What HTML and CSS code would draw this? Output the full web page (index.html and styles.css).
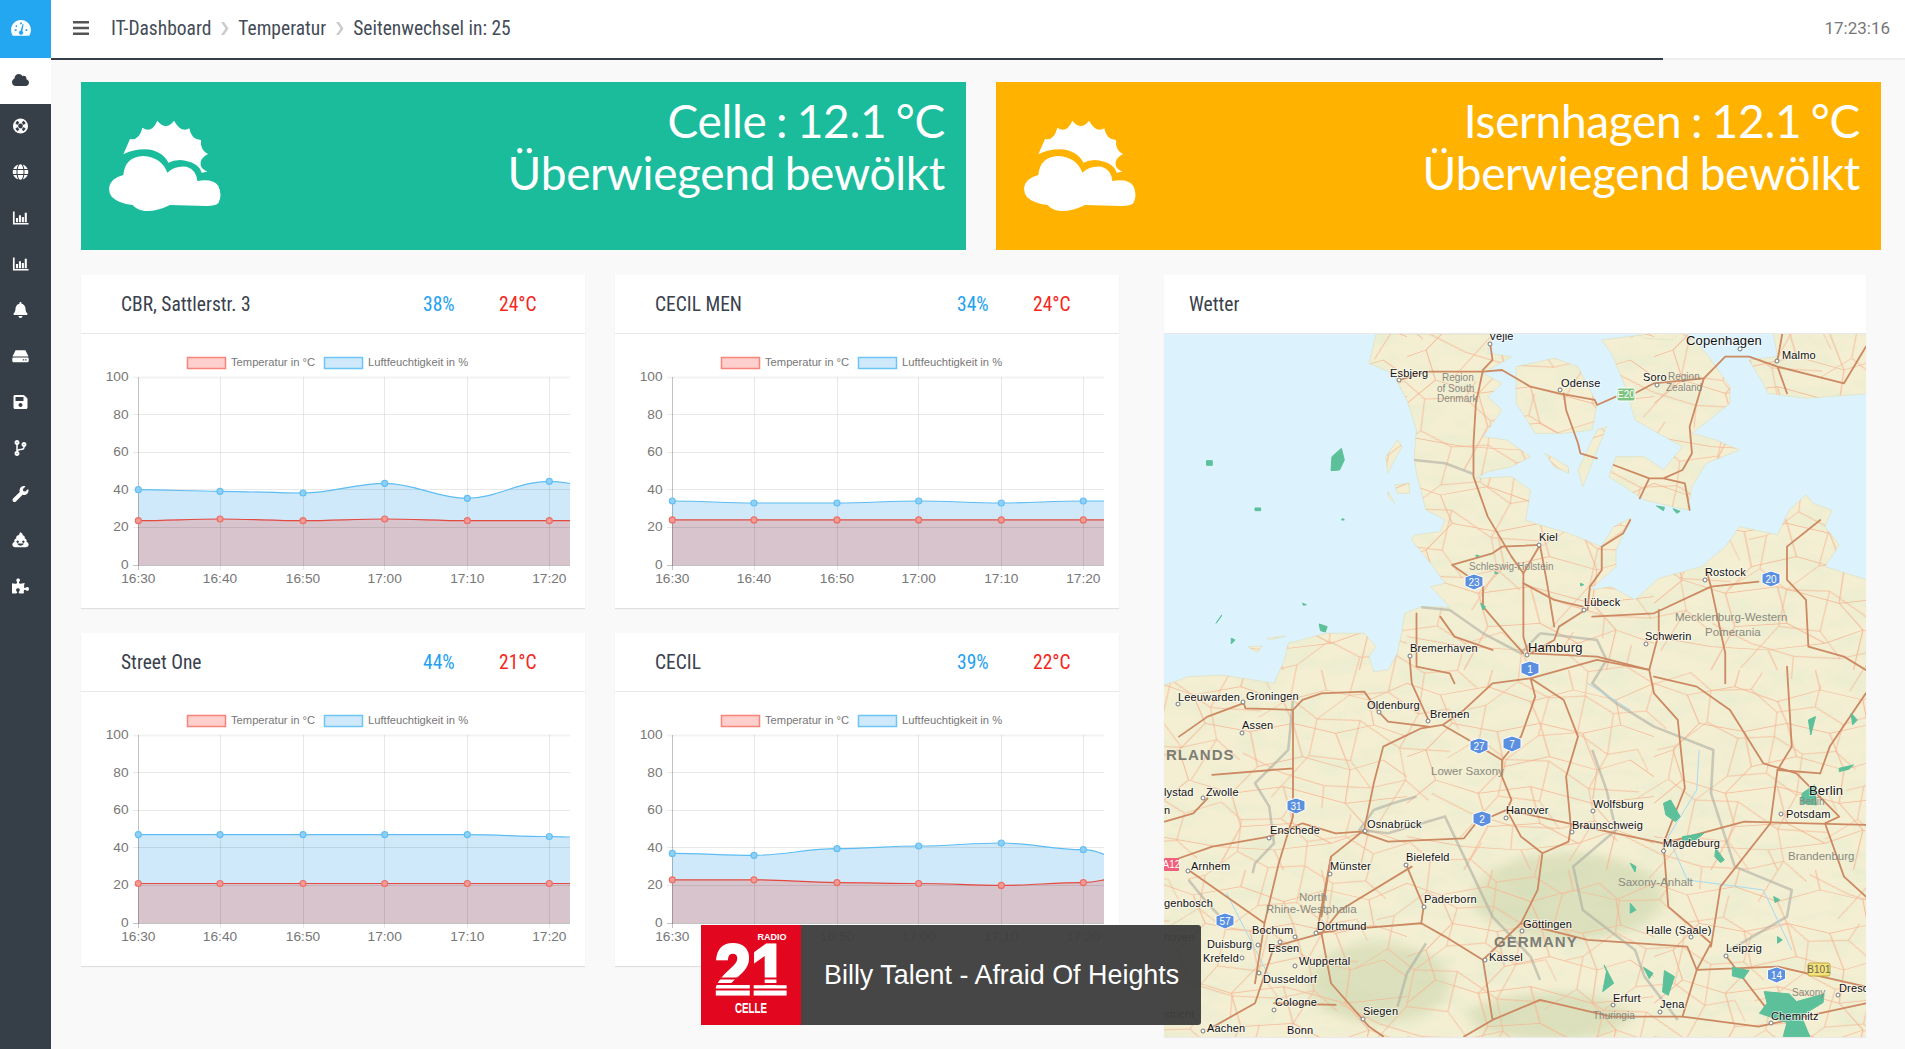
FILE: index.html
```html
<!DOCTYPE html>
<html lang="de">
<head>
<meta charset="utf-8">
<title>IT-Dashboard</title>
<link rel="stylesheet" href="styles.css">
</head>
<body>
<div class="app">
  <nav class="sidebar">
    <a class="nav-logo">
      <svg class="ico-logo" viewBox="0 0 24 20"><path class="w" d="M12 1C5.500 1 1 6 1 12c0 2.500.6 4.600 1.500 6 .3.500.8.700 1.300.700h16.400c.5 0 1-.2 1.300-.7.9-1.400 1.500-3.500 1.500-6C23 6 18.500 1 12 1z"/><path class="b" d="M13.800 5.500l-2.300 7.500a2.300 2.300 0 1 0 2 .5l1.400-7.800zM5 11.500h2v1.800H5zM17 11.500h2v1.800h-2zM6.800 6.800l1.300 1.300-1.200 1.200-1.300-1.300zM11 3.800h2v1.900h-2z"/></svg>
    </a>
    <a class="nav-item active"><svg class="ico" viewBox="0 0 640 512"><path d="M537.600 226.600c4.100-10.700 6.400-22.400 6.400-34.600 0-53-43-96-96-96-19.700 0-38.100 6-53.300 16.200C367 64.200 315.300 32 256 32c-88.400 0-160 71.600-160 160 0 2.700.1 5.400.2 8.100C40.200 219.800 0 273.200 0 336c0 79.500 64.500 144 144 144h368c70.700 0 128-57.300 128-128 0-61.900-44-113.600-102.400-125.400z"/></svg></a>
    <a class="nav-item"><svg class="ico" viewBox="0 0 18 18"><circle cx="9" cy="9" r="8.500"/><g class="cut"><path d="M3.200 5.800a7 7 0 0 1 2.600-2.600l2 2.300a4 4 0 0 0-2.300 2.300zM14.800 5.800a7 7 0 0 0-2.600-2.600l-2 2.300a4 4 0 0 1 2.300 2.300zM3.200 12.200a7 7 0 0 0 2.600 2.600l2-2.300a4 4 0 0 1-2.300-2.300zM14.800 12.200a7 7 0 0 1-2.600 2.600l-2-2.300a4 4 0 0 0 2.300-2.300z"/><circle cx="9" cy="9" r="2.700"/></g></svg></a>
    <a class="nav-item"><svg class="ico" viewBox="0 0 496 512"><path d="M336.500 160C322 70.700 287.800 8 248 8s-74 62.700-88.500 152h177zM152 256c0 22.200 1.200 43.500 3.300 64h185.300c2.100-20.500 3.300-41.800 3.300-64s-1.200-43.500-3.300-64H155.300c-2.100 20.500-3.300 41.800-3.300 64zm324.700-96c-28.600-67.900-86.500-120.400-158-141.600 24.400 33.800 41.200 84.700 50 141.600h108zM177.200 18.400C105.800 39.600 47.800 92.100 19.300 160h108c8.700-56.900 25.500-107.800 49.900-141.600zM487.400 192H372.700c2.100 21 3.300 42.500 3.300 64s-1.200 43-3.300 64h114.600c5.500-20.500 8.600-41.800 8.600-64s-3.100-43.500-8.500-64zM120 256c0-21.500 1.200-43 3.300-64H8.600C3.200 212.500 0 233.800 0 256s3.200 43.500 8.600 64h114.600c-2-21-3.200-42.500-3.200-64zm39.500 96c14.500 89.300 48.700 152 88.500 152s74-62.700 88.500-152h-177zm159.300 141.600c71.400-21.200 129.400-73.700 158-141.600h-108c-8.800 56.900-25.600 107.800-50 141.600zM19.300 352c28.600 67.900 86.500 120.400 158 141.600-24.400-33.800-41.200-84.700-50-141.600h-108z"/></svg></a>
    <a class="nav-item"><svg class="ico" viewBox="0 0 18 16"><path d="M1 1h1.800v12.200H17.500V15H1zM4.200 8h2.200v4.500H4.200zM7.300 5h2.200v7.500H7.300zM10.400 7h2.200v5.500h-2.200zM13.500 2.500h2.200v10h-2.200z"/></svg></a>
    <a class="nav-item"><svg class="ico" viewBox="0 0 18 16"><path d="M1 1h1.800v12.200H17.500V15H1zM4.200 8h2.200v4.500H4.200zM7.300 5h2.200v7.500H7.300zM10.400 7h2.200v5.500h-2.200zM13.500 2.500h2.200v10h-2.200z"/></svg></a>
    <a class="nav-item"><svg class="ico" viewBox="0 0 448 512"><path d="M224 512c35.320 0 63.970-28.650 63.970-64H160.030c0 35.350 28.650 64 63.970 64zm215.390-149.710c-19.320-20.760-55.470-51.990-55.470-154.290 0-77.700-54.480-139.900-127.940-155.160V32c0-17.670-14.320-32-31.980-32s-31.980 14.330-31.980 32v20.840C118.560 68.100 64.080 130.300 64.080 208c0 102.300-36.150 133.530-55.470 154.290-6 6.450-8.660 14.160-8.610 21.710.11 16.400 12.980 32 32.100 32h383.800c19.120 0 32-15.600 32.100-32 .05-7.550-2.610-15.270-8.610-21.710z"/></svg></a>
    <a class="nav-item"><svg class="ico" viewBox="0 0 18 14"><path d="M3.800 1h10.400l3.300 6.500H.5zM1.500 8.500h15A1.200 1.200 0 0 1 17.700 9.700v2.600a1.200 1.200 0 0 1-1.200 1.200h-15A1.200 1.200 0 0 1 .3 12.300V9.700a1.200 1.200 0 0 1 1.200-1.200z"/><path class="cut" d="M11.500 10.400h1.400v1.300h-1.400zM14 10.400h1.400v1.300H14z"/></svg></a>
    <a class="nav-item"><svg class="ico" viewBox="0 0 448 512"><path d="M433.941 129.941l-83.882-83.882A48 48 0 0 0 316.118 32H48C21.490 32 0 53.490 0 80v352c0 26.510 21.490 48 48 48h352c26.510 0 48-21.490 48-48V163.882a48 48 0 0 0-14.059-33.941zM224 416c-35.346 0-64-28.654-64-64 0-35.346 28.654-64 64-64s64 28.654 64 64c0 35.346-28.654 64-64 64zm96-304.520V212c0 6.627-5.373 12-12 12H76c-6.627 0-12-5.373-12-12V108c0-6.627 5.373-12 12-12h228.520c3.183 0 6.235 1.264 8.485 3.515l3.480 3.480A11.996 11.996 0 0 1 320 111.480z"/></svg></a>
    <a class="nav-item"><svg class="ico" viewBox="0 0 384 512"><path d="M384 144c0-44.200-35.800-80-80-80s-80 35.800-80 80c0 36.400 24.300 67.100 57.500 76.800-.6 16.100-4.200 28.500-11 36.900-15.400 19.200-49.300 22.400-85.200 25.700-28.200 2.600-57.400 5.400-81.300 16.900v-144c32.500-10.200 56-40.500 56-76.300 0-44.200-35.800-80-80-80S0 35.800 0 80c0 35.800 23.500 66.100 56 76.300v199.300C23.500 365.900 0 396.200 0 432c0 44.200 35.800 80 80 80s80-35.800 80-80c0-34-21.200-63.100-51.200-74.600 3.100-5.200 7.800-9.800 14.900-13.400 16.200-8.200 40.400-10.400 66.100-12.800 42.200-3.900 90-8.400 118.200-43.400 14-17.400 21.100-39.800 21.600-67.900 31.600-10.800 54.400-40.700 54.400-75.900zM80 64c8.800 0 16 7.200 16 16s-7.200 16-16 16-16-7.200-16-16 7.200-16 16-16zm0 384c-8.800 0-16-7.200-16-16s7.200-16 16-16 16 7.200 16 16-7.200 16-16 16zm224-320c8.800 0 16 7.200 16 16s-7.200 16-16 16-16-7.200-16-16 7.200-16 16-16z"/></svg></a>
    <a class="nav-item"><svg class="ico" viewBox="0 0 512 512"><path d="M507.730 109.100c-2.240-9.030-13.540-12.090-20.120-5.510l-74.360 74.360-67.880-11.310-11.310-67.880 74.360-74.360c6.620-6.620 3.430-17.900-5.660-20.160-47.380-11.740-99.550.91-136.580 37.930-39.640 39.640-50.550 97.100-34.050 147.200L18.740 402.760c-24.990 24.990-24.990 65.510 0 90.500 24.990 24.990 65.510 24.990 90.500 0l213.210-213.210c50.120 16.710 107.470 5.680 147.370-34.220 37.070-37.070 49.700-89.320 37.910-136.730z"/></svg></a>
    <a class="nav-item"><svg class="ico" viewBox="0 0 18 17"><path d="M8.500.3c2 .6 3 1.900 2.800 3.200 1.400.2 2.300 1.200 2.300 2.500 0 .4-.1.700-.2 1 1.300.2 2.200 1.200 2.200 2.400 0 .4-.1.800-.3 1.100 1.500.3 2.400 1.300 2.400 2.700 0 1.700-1.400 3-3.200 3H3.500C1.700 16.200.300 14.900.300 13.200c0-1.400.9-2.400 2.400-2.700-.2-.3-.3-.7-.3-1.100 0-1.200.9-2.200 2.200-2.400-.1-.3-.2-.6-.2-1 0-1.300 1-2.300 2.400-2.500C7.800 2.700 8 1.500 8.500.300z"/><path class="cut" d="M6 9a1.300 1.300 0 1 0 .01 0zM12 9a1.300 1.300 0 1 0 .01 0zM5.500 12.300h7c-.5 1.500-2 2.200-3.500 2.200s-3-.7-3.500-2.200z"/></svg></a>
    <a class="nav-item"><svg class="ico" viewBox="0 0 576 512"><path d="M519.442 288.651c-41.519 0-59.500 31.593-82.058 31.593C377.409 320.244 432 144 432 144s-196.288 80-196.288-3.297c0-35.827 36.288-46.250 36.288-85.985C272 19.216 243.885 0 210.539 0c-34.654 0-66.366 18.891-66.366 56.346 0 41.364 31.711 59.277 31.711 81.750C175.885 207.719 0 166.758 0 166.758v333.237s178.635 41.047 178.635-28.662c0-22.473-40-40.107-40-81.471 0-37.456 29.250-56.346 63.577-56.346 33.673 0 61.788 19.216 61.788 54.717 0 39.735-36.288 50.158-36.288 85.985 0 60.803 129.675 25.730 181.230 25.730 0 0-34.725-120.101 25.827-120.101 35.962 0 46.423 36.152 86.308 36.152C556.712 416 576 387.990 576 354.443c0-34.199-18.962-65.792-56.558-65.792z"/></svg></a>
  </nav>

  <div class="main">
    <header class="topbar">
      <svg class="burger" viewBox="0 0 16 14"><path d="M0 0h16v2.400H0zM0 5.800h16v2.400H0zM0 11.600h16V14H0z"/></svg>
      <ol class="crumbs">
        <li>IT-Dashboard</li>
        <li class="sep"><svg viewBox="0 0 9 13"><path d="M1 0h3l4.500 6.500L4 13H1l4.500-6.500z"/></svg></li>
        <li>Temperatur</li>
        <li class="sep"><svg viewBox="0 0 9 13"><path d="M1 0h3l4.500 6.500L4 13H1l4.500-6.500z"/></svg></li>
        <li>Seitenwechsel in: 25</li>
      </ol>
      <time class="clock">17:23:16</time>
    </header>
    <div class="progress"><div class="progress-bar"></div></div>

    <main class="content">
      <section class="weather-row">
        <article class="weather weather-green">
          <svg class="weather-icon" viewBox="0 0 480 390"><path d="M100 163L120 117Q148 122 157 83Q184 102 202 62Q228 94 252 62Q274 100 298 85Q304 120 333 120Q330 150 354 162Q328 175 332 196Q335 208 352 215L335 218Q325 185 270 180Q250 180 235 188Q215 150 165 148Q130 148 100 163Z"/><path d="M57 265Q60 235 100 225Q105 170 160 168Q215 172 232 218Q255 196 290 200Q320 210 322 243Q370 235 385 258Q398 285 385 310Q375 318 350 318L240 315Q200 335 165 333Q140 330 128 315Q85 310 65 290Q57 280 57 265Z"/></svg>
          <div class="weather-text"><div>Celle : 12.1 °C</div><div>Überwiegend bewölkt</div></div>
        </article>
        <article class="weather weather-orange">
          <svg class="weather-icon" viewBox="0 0 480 390"><path d="M100 163L120 117Q148 122 157 83Q184 102 202 62Q228 94 252 62Q274 100 298 85Q304 120 333 120Q330 150 354 162Q328 175 332 196Q335 208 352 215L335 218Q325 185 270 180Q250 180 235 188Q215 150 165 148Q130 148 100 163Z"/><path d="M57 265Q60 235 100 225Q105 170 160 168Q215 172 232 218Q255 196 290 200Q320 210 322 243Q370 235 385 258Q398 285 385 310Q375 318 350 318L240 315Q200 335 165 333Q140 330 128 315Q85 310 65 290Q57 280 57 265Z"/></svg>
          <div class="weather-text"><div>Isernhagen : 12.1 °C</div><div>Überwiegend bewölkt</div></div>
        </article>
      </section>

      <section class="panels">
        <article class="card chart-a">
          <header class="card-head"><span class="card-title">CBR, Sattlerstr. 3</span><span class="hum">38%</span><span class="temp">24°C</span></header>
          <svg class="chart" viewBox="0 1 504 274">
            <path class="a-hum" d="M57 156.700C87 156.700 109 158.300 139 158.300C169 158.300 192 160 222 160C252 160 274 150.300 304 150.300C334 150.300 356 165.300 386 165.300C416 165.300 438 148.300 468 148.300C478 148.300 483 149.500 489 150.500V232H57Z"/>
            <path class="a-temp" d="M57 187.700C87 187.700 109 186 139 186C169 186 192 187.700 222 187.700C252 187.700 274 186 304 186C334 186 356 187.700 386 187.700C416 187.700 438 187.700 468 187.700C478 187.700 483 187.700 489 187.700V232H57Z"/>
            <use href="#chart-lines"/>
            <path class="l-hum" d="M57 156.700C87 156.700 109 158.300 139 158.300C169 158.300 192 160 222 160C252 160 274 150.300 304 150.300C334 150.300 356 165.300 386 165.300C416 165.300 438 148.300 468 148.300C478 148.300 483 149.500 489 150.500"/>
            <path class="l-temp" d="M57 187.700C87 187.700 109 186 139 186C169 186 192 187.700 222 187.700C252 187.700 274 186 304 186C334 186 356 187.700 386 187.700C416 187.700 438 187.700 468 187.700C478 187.700 483 187.700 489 187.700"/>
            <g class="dot-h"><circle cx="57.300" cy="156.700" r="3"/><circle cx="139" cy="158.300" r="3"/><circle cx="222" cy="160" r="3"/><circle cx="303.700" cy="150.300" r="3"/><circle cx="386.300" cy="165.300" r="3"/><circle cx="468.300" cy="148.300" r="3"/></g>
            <g class="dot-t"><circle cx="57.300" cy="187.700" r="3"/><circle cx="139" cy="186" r="3"/><circle cx="222" cy="187.700" r="3"/><circle cx="303.700" cy="186" r="3"/><circle cx="386.300" cy="187.700" r="3"/><circle cx="468.300" cy="187.700" r="3"/></g>
            <rect class="lg-t" x="106.500" y="24.500" width="38" height="11"/><text class="lg" x="150" y="33">Temperatur in °C</text><rect class="lg-h" x="243.500" y="24.500" width="38" height="11"/><text class="lg" x="287" y="33">Luftfeuchtigkeit in %</text>
            <g class="ty"><text x="47.500" y="48">100</text><text x="47.500" y="85.600">80</text><text x="47.500" y="123">60</text><text x="47.500" y="160.500">40</text><text x="47.500" y="198">20</text><text x="47.500" y="235.500">0</text></g>
            <g class="tx"><text x="57.300" y="250">16:30</text><text x="139" y="250">16:40</text><text x="222" y="250">16:50</text><text x="303.700" y="250">17:00</text><text x="386.300" y="250">17:10</text><text x="468.300" y="250">17:20</text></g>
          </svg>
        </article>

        <article class="card chart-b">
          <header class="card-head"><span class="card-title">CECIL MEN</span><span class="hum">34%</span><span class="temp">24°C</span></header>
          <svg class="chart" viewBox="0 1 504 274">
            <path class="a-hum" d="M57 168C87 168 109 170 139 170C169 170 192 170 222 170C252 170 274 168 304 168C334 168 356 170 386 170C416 170 438 168 468 168C478 168 483 168 489 168V232H57Z"/>
            <path class="a-temp" d="M57 186.900H489V232H57Z"/>
            <use href="#chart-lines"/>
            <path class="l-hum" d="M57 168C87 168 109 170 139 170C169 170 192 170 222 170C252 170 274 168 304 168C334 168 356 170 386 170C416 170 438 168 468 168C478 168 483 168 489 168"/>
            <path class="l-temp" d="M57 186.900H489"/>
            <g class="dot-h"><circle cx="57.300" cy="168" r="3"/><circle cx="139" cy="170" r="3"/><circle cx="222" cy="170" r="3"/><circle cx="303.700" cy="168" r="3"/><circle cx="386.300" cy="170" r="3"/><circle cx="468.300" cy="168" r="3"/></g>
            <g class="dot-t"><circle cx="57.300" cy="186.900" r="3"/><circle cx="139" cy="186.900" r="3"/><circle cx="222" cy="186.900" r="3"/><circle cx="303.700" cy="186.900" r="3"/><circle cx="386.300" cy="186.900" r="3"/><circle cx="468.300" cy="186.900" r="3"/></g>
            <rect class="lg-t" x="106.500" y="24.500" width="38" height="11"/><text class="lg" x="150" y="33">Temperatur in °C</text><rect class="lg-h" x="243.500" y="24.500" width="38" height="11"/><text class="lg" x="287" y="33">Luftfeuchtigkeit in %</text>
            <g class="ty"><text x="47.500" y="48">100</text><text x="47.500" y="85.600">80</text><text x="47.500" y="123">60</text><text x="47.500" y="160.500">40</text><text x="47.500" y="198">20</text><text x="47.500" y="235.500">0</text></g>
            <g class="tx"><text x="57.300" y="250">16:30</text><text x="139" y="250">16:40</text><text x="222" y="250">16:50</text><text x="303.700" y="250">17:00</text><text x="386.300" y="250">17:10</text><text x="468.300" y="250">17:20</text></g>
          </svg>
        </article>

        <article class="card map-card">
          <header class="card-head"><span class="card-title">Wetter</span></header>
          <svg class="map" viewBox="0 1 702 703">
            <defs>
              <path id="land-main" d="M-10 1255L60 1220L130 1215L240 1240L262 1170L270 1120L350 1090L430 1090L455 1130L440 1160L450 1205L480 1200L500 1150L510 1080L515 1030L550 1010L610 1012L590 980L570 950L600 940L570 880L530 810L535 795L590 785L600 750L560 720L540 610L535 560L540 480L520 390L490 310L440 280L455 192L700 192L690 250L740 260L680 310L720 340L690 380L720 420L695 470L680 500L730 510L780 560L740 590L690 605L665 625L740 620L780 660L770 750L800 765L860 790L930 830L955 770L990 745L975 795L960 840L960 890L905 960L950 950L1000 990L1050 925L1140 890L1190 830L1220 770L1300 795L1325 720L1360 675L1375 700L1415 720L1400 770L1430 825L1400 890L1500 935V2310H-10ZM750 290L830 265L880 290L920 400L910 480L850 490L790 490L750 400ZM930 210L1100 180L1150 250L1200 350L1200 400L1120 490L1170 510L1220 540L1150 580L1120 650L1110 720L1020 690L945 620L960 560L1020 560L1060 600L1100 530L1000 450L980 350L950 250ZM1290 180H1500V370L1360 385L1280 370L1270 340L1240 270L1300 260ZM940 470L890 650L880 600L920 480ZM810 550L860 590L860 610L830 590ZM500 510L475 560L480 610L490 580L510 530ZM495 645L525 640L525 670L500 670ZM480 665L495 700L480 680ZM225 1105L265 1098L230 1110ZM185 1130L215 1128L205 1148ZM1000 185L1100 180L1080 210L1020 205Z"/>
              <path id="minor-net" class="minor" d="M0 40L70 75L95 160L40 240L60 330L0 400M70 75L170 50L260 95L350 60L440 90L520 40M95 160L190 185L280 160L370 190L450 165L520 200M190 185L205 290L150 370L170 470L120 600M260 95L280 160L300 260L205 290M300 260L400 300L470 270L520 320M370 190L400 300L390 400L440 480L420 600M60 330L150 370L260 350L390 400L520 380M260 350L280 460L170 470M280 460L360 520L440 480L520 520M0 500L120 530L240 540L360 520M170 50L180 0M350 60L340 0M440 90L450 165M40 240L0 260M240 540L260 600"/>
              <pattern id="minor-a" width="520" height="600" patternUnits="userSpaceOnUse"><use href="#minor-net"/></pattern>
              <pattern id="minor-b" width="520" height="600" patternUnits="userSpaceOnUse" patternTransform="translate(130 170) rotate(17) scale(.8 1.1)"><use href="#minor-net"/></pattern>
              <filter id="soft" x="-30%" y="-30%" width="160%" height="160%"><feGaussianBlur stdDeviation="14"/></filter>
              <filter id="mottle" x="0" y="0" width="100%" height="100%"><feTurbulence type="fractalNoise" baseFrequency=".012 .02" numOctaves="4" seed="7"/><feColorMatrix values="0 0 0 0 .76  0 0 0 0 .83  0 0 0 0 .62  2.600 0 0 0 -1.100"/></filter>
              <clipPath id="land-clip"><use href="#land-main"/></clipPath>
            </defs>
            <rect class="sea" width="702" height="704"/>
            <g transform="translate(-4,-63) scale(.475,.3333)">
              <use href="#land-main" class="land"/>
              <g clip-path="url(#land-clip)">
                <rect class="mottle" x="0" y="190" width="1490" height="2120" filter="url(#mottle)"/>
                <g class="terrain" filter="url(#soft)">
                  <ellipse cx="860" cy="1880" rx="200" ry="130"/><ellipse cx="460" cy="2140" rx="150" ry="120"/><ellipse cx="820" cy="2240" rx="170" ry="70"/>
                </g>
              </g>
              <use href="#land-main" class="minor-fill-a"/>
              <use href="#land-main" class="minor-fill-b"/>
              <g class="border">
                <path d="M535 570L600 580L660 612"/>
                <path d="M550 1012L610 1020L680 1090L760 1150L800 1090M800 1090L920 1110L940 1170L910 1240L960 1300L1040 1370L1165 1440L1160 1570L1210 1790L1330 1860L1320 1940L1200 2040M910 1440L940 1560L960 1680L870 1790L890 1920L1000 2040L1020 2120L1090 2250M280 1290L270 1440L200 1540L230 1610L240 1720L200 1780L195 1810M540 1580L490 1600L450 1620L420 1680L480 1690L600 1640L640 1760L700 1940L780 2060L800 2130M60 1830L100 1900L140 1960M560 2020L520 2110L500 2210"/>
              </g>
              <g class="rivers"><path d="M1135 1440L1130 1560L1070 1700L1110 1830L1270 1860L1330 2040M900 1240L990 1320M140 1870L230 2120"/></g>
              <g class="road">
                <path d="M695 220L700 270L680 300L665 400L660 520L660 620L690 740L740 860L765 910L765 1100L775 1150"/>
                <path d="M505 330L560 305L680 305L720 300L780 350L840 370L915 390L920 405L960 380M1000 370L1040 340L1145 325L1190 260L1240 260L1300 290L1440 340L1486 230M1300 290L1320 370M1310 192L1300 270"/>
                <path d="M850 370L855 420L880 520L885 550L920 565M1145 325L1115 470L1120 550L1100 600L1060 625L1030 625L1010 685M955 585L1030 625M1060 625L1105 640L1115 720"/>
                <path d="M615 885L700 850L720 830L800 825L815 940L830 1070M615 885L680 950L680 1010L740 1110L765 1150M800 825L765 910"/>
                <path d="M990 750L975 790L930 830L930 900L905 950L900 1020M765 940L830 990L890 1010M895 1020L840 1070L830 1110L780 1150"/>
                <path d="M910 1040L1040 1030L1160 950L1260 935M1320 930L1360 990L1365 1130L1440 1160L1486 1200M1150 900L1160 950L1190 1150L1190 1240M1050 1020L1050 1090L1030 1200M1320 930L1320 830L1390 750M540 1030L540 1190L610 1210L620 1240M590 1040L620 1100L700 1140M780 1150L920 1160L1030 1200"/>
              </g>
              <g class="road" transform="translate(0,1140)">
                <path d="M780 85L700 100L640 180L595 225L550 235L470 290L450 400L430 540L360 620L330 850M780 85L790 140L760 260L720 330L720 380L740 450L730 480L665 520L640 565L480 575L420 545L370 550L300 520L230 560L110 590L10 640M595 225L650 270L720 330"/>
                <path d="M780 85L850 150L880 260L855 380L865 530L860 575L805 610L760 560L730 480M805 610L795 720L760 820L680 930L600 860L550 820L380 840L330 850M730 480L860 520L1060 580L1230 515L1486 525"/>
                <path d="M1060 580L1070 770L1160 880L1130 960L1100 1100M1060 580L1105 415L1090 210L1040 130L1030 60L920 30L780 85M1040 80L1130 110L1200 180L1270 340L1340 370L1430 500L1400 520L1440 680L1486 740M1320 50L1330 290L1300 360L1285 520L1180 710L1160 890M1390 370L1410 290L1486 130"/>
                <path d="M525 15L530 100L565 210M460 185L480 215L565 230M175 155L180 175L280 180L300 150L340 130L430 125L460 185M40 260L100 200L175 160M280 180L280 500L250 640L220 820M110 375L280 355M100 445L70 490L10 515M60 660L220 820L200 1000M360 620L340 800M530 650L380 780L340 850M520 650L555 770L550 820"/>
                <path d="M680 930L700 1110L640 1160M700 1110L800 1050L950 1100L1100 1100L1260 1130L1486 1060M760 820L900 870L1110 890L1130 960L1300 950L1486 1010M340 850L240 890L200 1060L100 1140M340 850L360 1000L440 1130L470 1160M240 1060L370 1065M1190 915L1290 1100M1300 360L1390 370"/>
              </g>
              <g class="radar">
                <path d="M382 535L388 570L378 600L360 602L362 560ZM98 572L110 572L110 586L98 586ZM200 714L212 714L212 722L200 722ZM1045 708L1062 712L1060 722ZM1080 716L1095 724L1088 730ZM675 1000L685 1010L680 1020ZM335 1062L352 1070L348 1086L338 1082ZM130 1035L118 1060L126 1045ZM150 1105L158 1110L150 1122ZM385 745L388 750L382 750ZM665 855L672 858L666 860ZM705 905L712 910L706 912ZM885 940L892 944L886 948ZM300 1000L308 1004L302 1006Z"/>
                <path d="M1060 1600L1075 1590L1095 1640L1085 1655L1065 1635ZM1170 1735L1188 1770L1180 1778L1168 1760ZM1352 1570L1378 1545L1382 1605L1350 1600ZM1100 1700L1145 1690L1130 1708L1100 1716ZM1430 1495L1460 1485L1450 1498L1430 1505ZM1455 1330L1468 1350L1458 1365ZM990 1780L1002 1790L1000 1806ZM935 2085L955 2140L932 2165L940 2105ZM1018 2092L1038 2110L1030 2126ZM1062 2102L1083 2120L1070 2176L1058 2166ZM1205 2092L1240 2102L1228 2126L1205 2118ZM1272 2165L1325 2172L1340 2195L1398 2172L1396 2198L1350 2238L1368 2300H1312L1320 2258L1262 2230L1278 2200ZM1292 1880L1305 1890L1295 1898ZM1365 1350L1380 1340L1370 1395ZM990 1900L1002 1920L990 1930ZM1300 2000L1310 2010L1300 2020Z"/>
              </g>
            </g>
            <g class="places">
              <circle cx="326" cy="11" r="2"/><circle cx="576" cy="16" r="2"/><circle cx="613" cy="28" r="2"/><circle cx="235" cy="47" r="2"/><circle cx="396" cy="57" r="2"/><circle cx="493" cy="52" r="2"/><circle cx="375" cy="212" r="2"/><circle cx="541" cy="247" r="2"/><circle cx="420" cy="277" r="2"/><circle cx="482" cy="311" r="2"/><circle cx="246" cy="323" r="2"/><circle cx="363" cy="322" r="2"/><circle cx="14" cy="371" r="2"/><circle cx="79" cy="369" r="2"/><circle cx="215" cy="379" r="2"/><circle cx="264" cy="388" r="2"/><circle cx="78" cy="400" r="2"/><circle cx="39" cy="465" r="2"/><circle cx="342" cy="485" r="2"/><circle cx="429" cy="478" r="2"/><circle cx="617" cy="481" r="2"/><circle cx="201" cy="498" r="2"/><circle cx="105" cy="505" r="2"/><circle cx="408" cy="499" r="2"/><circle cx="499.500" cy="518" r="2"/><circle cx="242" cy="532" r="2"/><circle cx="24" cy="538" r="2"/><circle cx="166" cy="541" r="2"/><circle cx="260" cy="574" r="2"/><circle cx="131" cy="604" r="2"/><circle cx="152" cy="600" r="2"/><circle cx="358" cy="598" r="2"/><circle cx="527" cy="604" r="2"/><circle cx="94" cy="612" r="2"/><circle cx="116" cy="609" r="2"/><circle cx="562" cy="623" r="2"/><circle cx="78" cy="625" r="2"/><circle cx="321" cy="627" r="2"/><circle cx="131" cy="633" r="2"/><circle cx="95" cy="640" r="2"/><circle cx="449" cy="672" r="2"/><circle cx="110" cy="677" r="2"/><circle cx="496" cy="679" r="2"/><circle cx="199" cy="686" r="2"/><circle cx="607" cy="690" r="2"/><circle cx="674" cy="662" r="2"/><circle cx="39" cy="698" r="2"/>
            </g>
            <g class="shields">
              <g class="sh-blue">
                <path d="M301 244l9-3 9 3v9l-9 4-9-4z"/><path d="M598 241l9-3 9 3v9l-9 4-9-4z"/><path d="M357 331l9-3 9 3v9l-9 4-9-4z"/><path d="M306 408l9-3 9 3v9l-9 4-9-4z"/><path d="M339 406l9-3 9 3v9l-9 4-9-4z"/><path d="M123 468l9-3 9 3v9l-9 4-9-4z"/><path d="M309 481l9-3 9 3v9l-9 4-9-4z"/><path d="M52 583l9-3 9 3v9l-9 4-9-4z"/><path d="M603.500 637l9-3 9 3v9l-9 4-9-4z"/>
              </g>
              <rect class="sh-green" x="453" y="55" width="18" height="13" rx="2"/><rect class="sh-red" x="0" y="525" width="15" height="13" rx="1"/><rect class="sh-yellow" x="644" y="630" width="22" height="13" rx="2"/>
              <g class="sh-text"><text x="310" y="253">23</text><text x="607" y="250">20</text><text x="366" y="340">1</text><text x="315" y="417">27</text><text x="348" y="415">7</text><text x="132" y="477">31</text><text x="318" y="490">2</text><text x="61" y="592">57</text><text x="612.500" y="646">14</text><text x="462" y="65">E20</text><text x="7.500" y="535">A12</text></g>
              <text class="sh-dark" x="655" y="640">B101</text>
            </g>
            <g class="region">
              <text x="278" y="48">Region</text><text x="273" y="59">of South</text><text x="273" y="69">Denmark</text><text x="504" y="47">Region</text><text x="502" y="58">Zealand</text><text x="305" y="237">Schleswig-Holstein</text><text class="big" x="511" y="288">Mecklenburg-Western</text><text class="big" x="541" y="303">Pomerania</text><text class="big" x="267" y="442">Lower Saxony</text><text x="635" y="472">Berlin</text><text class="big" x="624" y="527">Brandenburg</text><text class="big" x="454" y="553">Saxony-Anhalt</text><text class="big" x="135" y="568">North</text><text class="big" x="102" y="580">Rhine-Westphalia</text><text x="429" y="686">Thuringia</text><text x="628" y="663">Saxony</text>
            </g>
            <text class="country" x="2" y="427">RLANDS</text><text class="country" x="330" y="614">GERMANY</text>
            <g class="city">
              <text x="325" y="7">Vejle</text><text class="lg-city" x="522" y="12">Copenhagen</text><text x="618" y="26">Malmo</text><text x="226" y="44">Esbjerg</text><text x="397" y="54">Odense</text><text x="479" y="48">Soro</text><text x="375" y="208">Kiel</text><text x="541" y="243">Rostock</text><text x="420" y="273">Lübeck</text><text x="481" y="307">Schwerin</text><text x="246" y="319">Bremerhaven</text><text class="lg-city" x="364" y="319">Hamburg</text>
              <text x="14" y="368">Leeuwarden</text><text x="82" y="367">Groningen</text><text x="203" y="376">Oldenburg</text><text x="266" y="385">Bremen</text><text x="78" y="396">Assen</text><text x="0" y="463">lystad</text><text x="42" y="463">Zwolle</text><text x="0" y="481">n</text><text x="342" y="481">Hanover</text><text x="429" y="475">Wolfsburg</text><text class="lg-city" x="645" y="462">Berlin</text><text x="622" y="485">Potsdam</text><text x="203" y="495">Osnabrück</text><text x="106" y="501">Enschede</text><text x="408" y="496">Braunschweig</text><text x="499" y="514">Magdeburg</text><text x="242" y="528">Bielefeld</text><text x="27" y="537">Arnhem</text><text x="166" y="537">Münster</text><text x="0" y="574">genbosch</text><text x="260" y="570">Paderborn</text><text x="88" y="601">Bochum</text><text x="153" y="597">Dortmund</text><text x="359" y="595">Göttingen</text><text x="482" y="601">Halle (Saale)</text><text x="43" y="615">Duisburg</text><text x="104" y="619">Essen</text><text x="562" y="619">Leipzig</text><text x="39" y="629">Krefeld</text><text x="325" y="628">Kassel</text><text x="135" y="632">Wuppertal</text><text x="99" y="650">Dusseldorf</text><text x="449" y="669">Erfurt</text><text x="111" y="673">Cologne</text><text x="496" y="675">Jena</text><text x="199" y="682">Siegen</text><text x="607" y="687">Chemnitz</text><text x="675" y="659">Dresden</text><text x="43" y="699">Aachen</text><text x="123" y="701">Bonn</text><text x="0" y="608">hoven</text><text x="0" y="685">stricht</text>
            </g>
          </svg>
        </article>

        <article class="card chart-c">
          <header class="card-head"><span class="card-title">Street One</span><span class="hum">44%</span><span class="temp">21°C</span></header>
          <svg class="chart" viewBox="0 1 504 274">
            <path class="a-hum" d="M57 143.600H386C416 143.600 438 145.500 468 145.500C478 145.500 483 146 489 146V232H57Z"/>
            <path class="a-temp" d="M57 192.500H489V232H57Z"/>
            <use href="#chart-lines"/>
            <path class="l-hum" d="M57 143.600H386C416 143.600 438 145.500 468 145.500C478 145.500 483 146 489 146"/>
            <path class="l-temp" d="M57 192.500H489"/>
            <g class="dot-h"><circle cx="57.300" cy="143.600" r="3"/><circle cx="139" cy="143.600" r="3"/><circle cx="222" cy="143.600" r="3"/><circle cx="303.700" cy="143.600" r="3"/><circle cx="386.300" cy="143.600" r="3"/><circle cx="468.300" cy="145.500" r="3"/></g>
            <g class="dot-t"><circle cx="57.300" cy="192.500" r="3"/><circle cx="139" cy="192.500" r="3"/><circle cx="222" cy="192.500" r="3"/><circle cx="303.700" cy="192.500" r="3"/><circle cx="386.300" cy="192.500" r="3"/><circle cx="468.300" cy="192.500" r="3"/></g>
            <rect class="lg-t" x="106.500" y="24.500" width="38" height="11"/><text class="lg" x="150" y="33">Temperatur in °C</text><rect class="lg-h" x="243.500" y="24.500" width="38" height="11"/><text class="lg" x="287" y="33">Luftfeuchtigkeit in %</text>
            <g class="ty"><text x="47.500" y="48">100</text><text x="47.500" y="85.600">80</text><text x="47.500" y="123">60</text><text x="47.500" y="160.500">40</text><text x="47.500" y="198">20</text><text x="47.500" y="235.500">0</text></g>
            <g class="tx"><text x="57.300" y="250">16:30</text><text x="139" y="250">16:40</text><text x="222" y="250">16:50</text><text x="303.700" y="250">17:00</text><text x="386.300" y="250">17:10</text><text x="468.300" y="250">17:20</text></g>
          </svg>
        </article>

        <article class="card chart-d">
          <header class="card-head"><span class="card-title">CECIL</span><span class="hum">39%</span><span class="temp">22°C</span></header>
          <svg class="chart" viewBox="0 1 504 274">
            <path class="a-hum" d="M57 162.400C87 162.400 109 164.300 139 164.300C169 164.300 192 157.700 222 157.700C252 157.700 274 155 304 155C334 155 356 152 386 152C416 152 438 158.700 468 158.700C478 158.700 483 161 489 163.400V232H57Z"/>
            <path class="a-temp" d="M57 188.800C87 188.800 109 188.800 139 188.800C169 188.800 192 191.600 222 191.600C252 191.600 274 192.500 304 192.500C334 192.500 356 194.400 386 194.400C416 194.400 438 191.600 468 191.600C478 191.600 483 190 489 188.800V232H57Z"/>
            <use href="#chart-lines"/>
            <path class="l-hum" d="M57 162.400C87 162.400 109 164.300 139 164.300C169 164.300 192 157.700 222 157.700C252 157.700 274 155 304 155C334 155 356 152 386 152C416 152 438 158.700 468 158.700C478 158.700 483 161 489 163.400"/>
            <path class="l-temp" d="M57 188.800C87 188.800 109 188.800 139 188.800C169 188.800 192 191.600 222 191.600C252 191.600 274 192.500 304 192.500C334 192.500 356 194.400 386 194.400C416 194.400 438 191.600 468 191.600C478 191.600 483 190 489 188.800"/>
            <g class="dot-h"><circle cx="57.300" cy="162.400" r="3"/><circle cx="139" cy="164.300" r="3"/><circle cx="222" cy="157.700" r="3"/><circle cx="303.700" cy="155" r="3"/><circle cx="386.300" cy="152" r="3"/><circle cx="468.300" cy="158.700" r="3"/></g>
            <g class="dot-t"><circle cx="57.300" cy="188.800" r="3"/><circle cx="139" cy="188.800" r="3"/><circle cx="222" cy="191.600" r="3"/><circle cx="303.700" cy="192.500" r="3"/><circle cx="386.300" cy="194.400" r="3"/><circle cx="468.300" cy="191.600" r="3"/></g>
            <rect class="lg-t" x="106.500" y="24.500" width="38" height="11"/><text class="lg" x="150" y="33">Temperatur in °C</text><rect class="lg-h" x="243.500" y="24.500" width="38" height="11"/><text class="lg" x="287" y="33">Luftfeuchtigkeit in %</text>
            <g class="ty"><text x="47.500" y="48">100</text><text x="47.500" y="85.600">80</text><text x="47.500" y="123">60</text><text x="47.500" y="160.500">40</text><text x="47.500" y="198">20</text><text x="47.500" y="235.500">0</text></g>
            <g class="tx"><text x="57.300" y="250">16:30</text><text x="139" y="250">16:40</text><text x="222" y="250">16:50</text><text x="303.700" y="250">17:00</text><text x="386.300" y="250">17:10</text><text x="468.300" y="250">17:20</text></g>
          </svg>
        </article>
      </section>
    </main>
  </div>

  <aside class="toast">
    <svg class="toast-logo" viewBox="0 0 100 100">
      <rect class="logo-bg" width="100" height="100"/>
      <text class="logo-radio" x="85.500" y="15" text-anchor="end" textLength="29" lengthAdjust="spacingAndGlyphs">RADIO</text>
      <text class="logo-21" x="14" y="69" textLength="72" lengthAdjust="spacingAndGlyphs">21</text>
      <rect class="logo-bg" x="10" y="52.500" width="80" height="2"/><rect class="logo-bg" x="10" y="58" width="80" height="2"/><rect class="logo-bg" x="10" y="63.500" width="80" height="2"/>
      <text class="logo-celle" x="50" y="87.500" text-anchor="middle" textLength="32" lengthAdjust="spacingAndGlyphs">CELLE</text>
    </svg>
    <span class="toast-text">Billy Talent - Afraid Of Heights</span>
  </aside>
</div>

<svg class="defs" width="0" height="0">
  <defs>
    <g id="chart-lines">
      <path class="gl" d="M52 81.500H489M52 119.500H489M52 156.500H489M52 194.500H489M139.500 44V237M222.500 44V237M303.500 44V237M386.500 44V237M468.500 44V237"/>
      <path class="gl-top" d="M52 44.500H489"/>
      <path class="axis" d="M57.500 44V237M52 232.500H489"/>
    </g>
  </defs>
</svg>
</body>
</html>
```
FILE: styles.css
```css
* { box-sizing: border-box; }
html, body { margin: 0; height: 100%; }
body { background: #f9f9f9; font-family: Roboto, "Liberation Sans", sans-serif; overflow: hidden; color: #39414c; }
.app { display: flex; height: 1049px; position: relative; }
.defs { position: absolute; }

.sidebar { width: 51px; background: #363e48; flex: none; display: flex; flex-direction: column; }
.nav-logo { height: 58px; background: #22a7f0; display: flex; align-items: center; padding-left: 10px; }
.ico-logo { width: 22px; height: 18px; margin-top: -2px; }
.ico-logo .w { fill: #fff; }
.ico-logo .b { fill: #22a7f0; }
.nav-item { height: 46px; display: flex; align-items: center; justify-content: center; width: 100%; padding: 0 11px 3px 0; fill: #fff; }
.nav-item .cut { fill: #363e48; }
.nav-item.active { background: #fff; fill: #363e48; }
.ico { width: 17px; height: 16px; }

.main { flex: 1; min-width: 0; display: flex; flex-direction: column; }
.topbar { height: 58px; background: #fff; display: flex; align-items: center; padding: 0 15px 0 22px; }
.burger { width: 16px; height: 14px; fill: #555; margin-top: -2px; }
.crumbs { list-style: none; margin: -2px 0 0 22px; padding: 0; display: flex; align-items: center; gap: 9px; font-size: 19.500px; font-stretch: 75%; font-weight: 400; color: #444c57; }
.sep { display: flex; }
.sep svg { width: 9px; height: 13px; fill: #ccc; }
.clock { margin-left: auto; margin-top: -2px; font-size: 17px; color: #777; }
.progress { height: 2px; background: #eee; }
.progress-bar { height: 2px; width: 1612px; background: #363e48; }

.content { padding: 22px 24px 0 30px; }
.weather-row { display: grid; grid-template-columns: 885px 885px; column-gap: 30px; }
.weather { height: 168px; display: flex; justify-content: space-between; align-items: flex-start; color: #fff; padding-right: 21px; }
.weather-green { background: #1abc9c; }
.weather-orange { background: #ffb300; }
.weather-icon { width: 160px; height: 130px; fill: #fff; margin-left: 9px; margin-top: 18px; }
.weather-text { margin-top: 13px; font-family: Lato, sans-serif; font-size: 46px; line-height: 52px; letter-spacing: -.3px; word-spacing: -2px; text-align: right; font-weight: 400; }

.panels { margin-top: 25px; display: grid; grid-template-columns: 504px 504px 717px; grid-template-rows: 333px 333px; column-gap: 30px; row-gap: 25px; }
.card { background: #fff; box-shadow: 0 1px 1px rgba(0,0,0,.1); }
.map-card { grid-column: 3; grid-row: 1 / span 3; margin-left: 15px; height: 762px; width: 702px; box-shadow: 0 1px 1px rgba(0,0,0,.06); }
.chart-a { grid-column: 1; grid-row: 1; }
.chart-b { grid-column: 2; grid-row: 1; }
.chart-c { grid-column: 1; grid-row: 2; }
.chart-d { grid-column: 2; grid-row: 2; }
.card-head { height: 59px; border-bottom: 1px solid #e8e8e8; display: flex; align-items: center; padding: 0 0 0 40px; font-size: 19.500px; font-stretch: 75%; font-weight: 400; }
.map-card .card-head { padding-left: 25px; }
.card-title { flex: none; width: 302px; color: #39414c; }
.hum { color: #22a0f0; width: 76px; }
.temp { color: #f5271d; }

.chart { display: block; width: 504px; height: 274px; }
.a-hum { fill: #d0e9fa; }
.a-temp { fill: #d7c4cd; }
.l-hum { fill: none; stroke: #5dbdf2; stroke-width: 1.200; }
.l-temp { fill: none; stroke: #e5483f; stroke-width: 1.200; }
.dot-h circle { fill: #8fd0f7; stroke: #64bff3; stroke-width: 1.200; }
.dot-t circle { fill: #f29a94; stroke: #ec6f67; stroke-width: 1.200; }
.gl { fill: none; stroke: rgba(0,0,0,.09); stroke-width: 1; }
.gl-top { fill: none; stroke: rgba(0,0,0,.05); stroke-width: 2; }
.axis { fill: none; stroke: rgba(0,0,0,.24); stroke-width: 1; }
.lg-t { fill: #fdd0cd; stroke: #f8847a; stroke-width: 1.500; }
.lg-h { fill: #d0e9fa; stroke: #6cc5f5; stroke-width: 1.500; }
.lg { font-family: "Liberation Sans", Arial, sans-serif; font-size: 11.200px; fill: #777; }
.ty text, .tx text { font-family: "Liberation Sans", Arial, sans-serif; font-size: 13.700px; fill: #777; }
.ty text { text-anchor: end; }
.tx text { text-anchor: middle; }

.map { display: block; width: 702px; height: 703px; }
.sea { fill: #dcf2fc; }
.land { fill: #f4efd3; stroke: #dfe3c4; stroke-width: 2; }
.mottle { opacity: .5; }
.terrain { fill: #bccb9c; opacity: .4; }
.minor-fill-a { fill: url(#minor-a); }
.minor-fill-b { fill: url(#minor-b); }
.minor { fill: none; stroke: #f5b694; stroke-width: 2.200; stroke-linejoin: round; }
.border path { fill: none; stroke: #aeaea2; stroke-width: 2.600; opacity: .6; stroke-linejoin: round; vector-effect: non-scaling-stroke; }
.rivers path { fill: none; stroke: #a8daf0; stroke-width: 1; vector-effect: non-scaling-stroke; }
.road path { fill: none; stroke: #cc8962; stroke-width: 1.800; stroke-linejoin: round; stroke-linecap: round; vector-effect: non-scaling-stroke; }
.radar path { fill: #5cc09a; stroke: #5cc09a; stroke-width: 1; stroke-linejoin: round; vector-effect: non-scaling-stroke; }
.places circle { fill: #fff; stroke: #777; stroke-width: 1; }
.sh-blue path { fill: #5b8fe0; stroke: #fff; stroke-width: 1; }
.sh-green { fill: #7cc47f; stroke: #fff; }
.sh-red { fill: #f0607a; }
.sh-yellow { fill: #f5e27a; stroke: #c0a840; }
.sh-text text { font-family: "Liberation Sans", Arial, sans-serif; font-size: 10px; fill: #fff; text-anchor: middle; }
.sh-dark { font-family: "Liberation Sans", Arial, sans-serif; font-size: 10px; fill: #665; text-anchor: middle; }
.region text { font-family: "Liberation Sans", Arial, sans-serif; font-size: 10px; fill: #8a8a80; }
.region .big { font-size: 11.500px; }
.country { font-family: "Liberation Sans", Arial, sans-serif; font-size: 15px; font-weight: 700; fill: #7d7d76; letter-spacing: 1px; }
.city text { font-family: "Liberation Sans", Arial, sans-serif; font-size: 11px; letter-spacing: .15px; fill: #111; paint-order: stroke; stroke: rgba(255,255,255,.55); stroke-width: 2px; }
.city .lg-city { font-size: 13px; }

.toast { position: absolute; left: 701px; top: 925px; width: 500px; height: 100px; background: rgba(62,62,62,.96); display: flex; align-items: center; border-radius: 0 3px 3px 0; }
.toast-logo { width: 100px; height: 100px; flex: none; }
.logo-bg { fill: #e2071f; }
.logo-radio { font-family: "Liberation Sans", sans-serif; font-size: 8.500px; font-weight: 700; fill: #fff; }
.logo-21 { font-family: "Liberation Sans", sans-serif; font-size: 71px; font-weight: 700; fill: #fff; stroke: #fff; stroke-width: 3; }
.logo-celle { font-family: "Liberation Sans", sans-serif; font-size: 14px; font-weight: 700; fill: #fff; }
.toast-text { margin-left: 23px; font-family: "Liberation Sans", Arial, sans-serif; font-size: 26.900px; color: #fff; white-space: nowrap; }
```
